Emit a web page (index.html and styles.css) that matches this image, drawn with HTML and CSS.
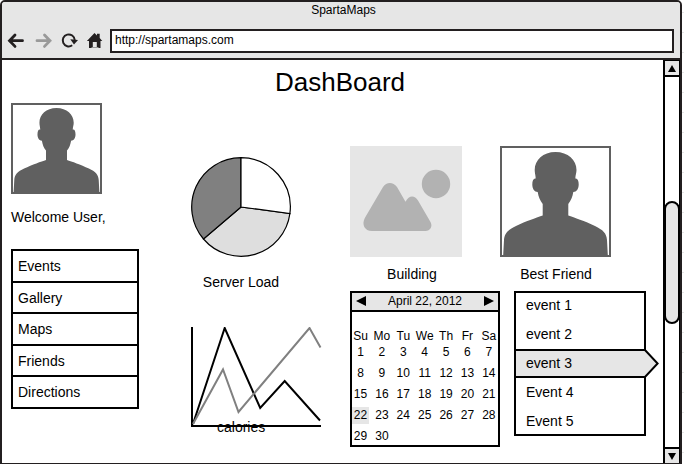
FILE: index.html
```html
<!DOCTYPE html>
<html lang="en">
<head>
<meta charset="utf-8">
<title>SpartaMaps</title>
<link rel="stylesheet" href="styles.css">
</head>
<body>
<svg class="defs" width="0" height="0" aria-hidden="true">
  <symbol id="person" viewBox="0 0 111 111">
    <path d="M55.500 6C43 6 34.700 14 34.700 24C34.700 27 35.500 29 35.700 32.500C33.500 32 32.300 34.500 32.300 38.500C32.300 43 34.500 46 37.700 46C38.500 51 40 54.500 42.700 58V69.500C37 71.500 26 75 16 80C8 84 4.500 87 4 94L3.200 109H107.800L107 94C106.500 87 103 84 95 80C85 75 74 71.500 68.300 69.500V58C71 54.500 72.500 51 73.300 46C76.500 46 78.700 43 78.700 38.500C78.700 34.500 77.500 32 75.300 32.500C75.500 29 76.500 27 76.500 24C76.500 14 68 6 55.500 6Z"/>
  </symbol>
</svg>
<div class="window">
  <header class="chrome">
    <div class="title">SpartaMaps</div>
    <div class="toolbar">
      <svg class="tools" width="108" height="24" viewBox="0 0 108 24">
        <path class="back" d="M13 6L7.500 11.700L13 17.400M8 11.700H20.500"/>
        <path class="forward" d="M35 11.700H48M42.500 6L48 11.700L42.500 17.400"/>
        <path class="reload" d="M70.200 16.300A6 6 0 1 1 72.700 11"/>
        <path class="solid" d="M68.300 10.300L76 11L72 15.500Z"/>
        <path class="solid" d="M92.500 4L95 6.500V4.700H97.700V9L100.300 12H98.500V19H94.800V13H90.800V19H87V12H84.900Z"/>
        <path class="doorstep" d="M89.500 18.500H96.500"/>
      </svg>
      <div class="address">http://spartamaps.com</div>
    </div>
  </header>
  <div class="body">
    <main>
      <h1>DashBoard</h1>
      <div class="columns">
        <aside>
          <div class="avatar small"><svg viewBox="0 0 111 111"><use href="#person"/></svg></div>
          <p class="welcome">Welcome User,</p>
          <nav>
            <a>Events</a><a>Gallery</a><a>Maps</a><a>Friends</a><a>Directions</a>
          </nav>
        </aside>
        <section class="charts">
          <svg class="pie" width="102" height="102" viewBox="0 0 102 102">
            <circle cx="51" cy="51" r="49.300" fill="#fff" stroke="none"/>
            <path d="M51 51L99.900 57.500A49.300 49.300 0 0 1 13.500 83Z" fill="#dedede"/>
            <path d="M51 51L13.500 83A49.300 49.300 0 0 1 51 1.700Z" fill="#808080"/>
            <path d="M51 51V1.700A49.300 49.300 0 0 1 99.900 57.500Z" fill="#fff"/>
          </svg>
          <p class="label">Server Load</p>
          <div class="graph">
            <svg width="132" height="101" viewBox="0 0 132 101">
              <path class="axis" d="M2 0V99H131"/>
              <path class="black" d="M3 97L34.700 1L70.200 81L94.700 54L130 93.500"/>
              <path class="gray" d="M3 97L33 42.500L48.500 85L119.500 1L130.500 20.500"/>
            </svg>
            <span class="caption">calories</span>
          </div>
        </section>
        <section class="place">
          <svg class="photo" width="112" height="111" viewBox="0 0 112 111">
            <path d="M0 0H112V111H0Z" fill="#e6e6e6"/>
            <g fill="#b2b2b2"><circle cx="86" cy="38" r="14.200"/>
            <path d="M14.800 72L33 41C36.500 35.500 43 35.500 47 41L55.500 55.800C59 49 64.500 49 68 54.500L80.500 76C83 80.500 80 85 75.500 85H22C14.500 85 11.500 78.500 14.800 72Z"/></g>
          </svg>
          <p class="label">Building</p>
          <div class="calendar">
            <div class="month"><i class="prev"></i><span>April 22, 2012</span><i class="next"></i></div>
            <div class="week names"><b>Su</b><b>Mo</b><b>Tu</b><b>We</b><b>Th</b><b>Fr</b><b>Sa</b></div>
            <div class="week"><b>1</b><b>2</b><b>3</b><b>4</b><b>5</b><b>6</b><b>7</b></div>
            <div class="week"><b>8</b><b>9</b><b>10</b><b>11</b><b>12</b><b>13</b><b>14</b></div>
            <div class="week"><b>15</b><b>16</b><b>17</b><b>18</b><b>19</b><b>20</b><b>21</b></div>
            <div class="week"><b class="today">22</b><b>23</b><b>24</b><b>25</b><b>26</b><b>27</b><b>28</b></div>
            <div class="week"><b>29</b><b>30</b></div>
          </div>
        </section>
        <section class="friend">
          <div class="avatar"><svg viewBox="0 0 111 111"><use href="#person"/></svg></div>
          <p class="label">Best Friend</p>
          <ul class="events">
            <li>event 1</li><li>event 2</li>
            <li class="selected">event 3<svg class="pointer" width="16" height="29" viewBox="0 0 16 29"><path d="M0 1H2L14.600 14.500L2 28H0"/></svg></li>
            <li>Event 4</li><li>Event 5</li>
          </ul>
        </section>
      </div>
    </main>
    <div class="scrollbar">
      <div class="button up"><i></i></div>
      <div class="track"><div class="thumb"></div></div>
      <div class="button down"><i></i></div>
    </div>
  </div>
</div>
</body>
</html>
```
FILE: styles.css
```css
* { box-sizing: border-box; }
body {
  margin: 0;
  height: 464px;
  overflow: hidden;
  color: #000;
  background: repeating-linear-gradient(#fff 0 12px, #e6e6e6 12px 13px, #fff 13px 20px);
  font: 14px/16px "Liberation Sans", Arial, sans-serif;
}
p, h1, ul { margin: 0; padding: 0; }
svg { display: block; }
.defs { position: absolute; }
.window {
  display: flex;
  flex-direction: column;
  width: 682px;
  height: 464px;
  border: 2px solid #231f20;
  border-bottom-width: 1px;
  border-radius: 5px 5px 0 0;
  background: #fff;
  overflow: hidden;
}
.chrome {
  height: 58px;
  background: #e6e6e6;
  border-bottom: 2px solid #231f20;
}
.title {
  height: 27px;
  padding-left: 5px;
  text-align: center;
  font-size: 12px;
  line-height: 16px;
}
.toolbar { display: flex; }
.tools { flex: none; width: 108px; height: 24px; fill: none; }
.back, .forward { stroke: #231f20; stroke-width: 2.800; stroke-linecap: round; }
.forward { stroke: #999; }
.reload { stroke: #231f20; stroke-width: 2; }
.solid { fill: #231f20; }
.doorstep { stroke: #999; }
.address {
  width: 564px;
  height: 24px;
  padding-left: 3px;
  border: 2px solid #231f20;
  background: #fff;
  font-size: 12px;
  line-height: 19px;
}
.body { display: flex; flex: 1; min-height: 0; }
main { width: 661px; }
h1 {
  height: 43px;
  padding: 6px 0 0 15px;
  text-align: center;
  font-size: 26px;
  font-weight: normal;
  line-height: 32px;
}
.columns { display: flex; padding-left: 9px; }
aside { width: 128px; }
.avatar {
  width: 111px;
  height: 111px;
  border: 2px solid #606060;
  fill: #606060;
}
.avatar svg { width: 111px; height: 111px; margin: -2px; }
.avatar.small, .avatar.small svg { width: 91px; height: 91px; }
.welcome { margin-top: 15px; white-space: nowrap; }
nav { height: 160px; margin-top: 24px; border: 2px solid #000; }
nav a { display: block; height: 31.500px; padding: 7px 0 0 5px; border-bottom: 2px solid #000; }
nav a:last-child { border: 0; }
.charts { width: 132px; margin: 53px 0 0 51px; }
.pie { stroke: #000; stroke-width: 1.200; }
.label { text-align: center; white-space: nowrap; }
.charts .label { width: 102px; margin-top: 16px; }
.graph { position: relative; margin-top: 37px; }
.graph svg { fill: none; stroke-width: 2; }
.axis, .black { stroke: #000; }
.gray { stroke: #808080; }
.caption { position: absolute; left: 27px; top: 92px; }
.place { width: 150px; margin: 43px 0 0 28px; }
.place .label { width: 124px; margin-top: 9px; }
.calendar { height: 156px; margin-top: 9px; border: 2px solid #000; font-size: 12px; }
.month {
  display: flex;
  align-items: center;
  justify-content: space-between;
  height: 19px;
  padding: 0 4px 1px;
  border-bottom: 2px solid #000;
  background: #e6e6e6;
  line-height: 16px;
}
.prev, .next { border: solid transparent; border-width: 5px 0; }
.prev { border-right: 10px solid #000; }
.next { border-left: 10px solid #000; }
.week {
  display: grid;
  grid-template-columns: repeat(7, 21.400px);
  height: 20.900px;
  line-height: 17px;
}
.week b { width: 17px; height: 17px; text-align: center; font-weight: normal; }
.names { height: 32px; padding-top: 16px; }
.names b { width: 21px; margin-left: -2px; }
.today { background: #e6e6e6; }
.friend { width: 146px; margin: 43px 0 0; }
.friend .label { width: 112px; margin-top: 9px; }
.events { width: 132px; height: 145px; margin: 9px 0 0 14px; border: 2px solid #000; list-style: none; }
.events li { position: relative; height: 29px; padding: 4px 0 0 10px; }
.events .selected {
  height: 29px;
  margin: -2px -2px 2px 0;
  border: solid #000;
  border-width: 2px 0;
  background: #e6e6e6;
}
.pointer { position: absolute; left: 127px; top: -2px; fill: #e6e6e6; stroke: #000; stroke-width: 2; }
.scrollbar {
  display: flex;
  flex-direction: column;
  width: 17px;
  border: solid #000;
  border-width: 0 1px 0 2px;
}
.button { display: flex; align-items: center; justify-content: center; background: #e6e6e6; }
.button i { border: solid transparent; border-width: 0 4px; }
.up { height: 17px; border-top: 1px solid #000; border-bottom: 2px solid #000; }
.up i { border-bottom: 7px solid #000; }
.down { height: 16px; border-top: 2px solid #000; }
.down i { border-top: 7px solid #000; }
.track { flex: 1; padding-top: 124px; }
.thumb { width: 16px; height: 123px; margin-left: -1px; border: 2px solid #000; border-radius: 8px; background: #e6e6e6; }
```
